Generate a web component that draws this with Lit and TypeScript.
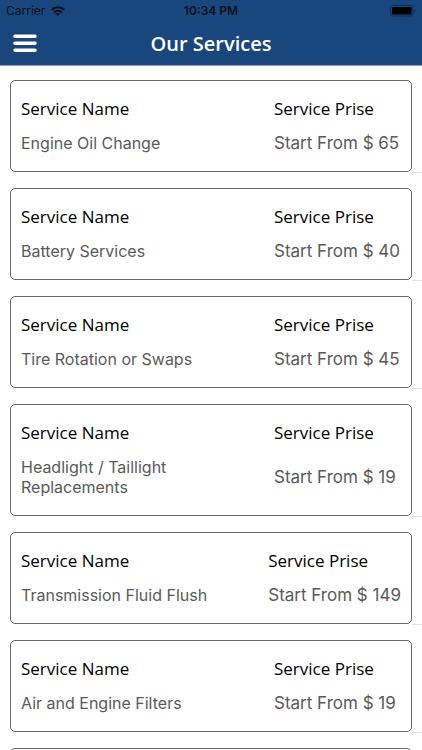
import { LitElement, html, css } from "lit";
import { customElement, property } from "lit/decorators.js";

interface Service {
  name: string;
  price: string;
}

const SERVICES: Service[] = [
  { name: "Engine Oil Change", price: "65" },
  { name: "Battery Services", price: "40" },
  { name: "Tire Rotation or Swaps", price: "45" },
  { name: "Headlight / Taillight Replacements", price: "19" },
  { name: "Transmission Fluid Flush", price: "149" },
  { name: "Air and Engine Filters", price: "19" },
];

@customElement("status-bar")
class StatusBar extends LitElement {
  static styles = css`
    :host {
      display: grid;
      grid-template-columns: 1fr auto 1fr;
      align-items: center;
      height: 22px;
      padding: 0 6px;
      color: #04101f;
      font: 12px/16px Inter, "Liberation Sans", sans-serif;
    }
    .carrier {
      display: flex;
      align-items: center;
      gap: 6px;
    }
    .time {
      font-weight: 600;
    }
    .battery {
      justify-self: end;
    }
    svg {
      display: block;
    }
  `;

  render() {
    return html`
      <div class="carrier">
        <span>Carrier</span>
        <svg width="14" height="10" viewBox="0 0 14 10" fill="none" stroke="currentColor" stroke-width="2.2" aria-hidden="true">
          <path d="M0.8 4C4.3 0.3 9.7 0.3 13.2 4" />
          <path d="M3.2 6.4C5.4 4.2 8.6 4.2 10.8 6.4" />
          <path d="M7 9.9L4.9 7.8C6.1 6.7 7.9 6.7 9.1 7.8Z" fill="currentColor" stroke="none" />
        </svg>
      </div>
      <span class="time">10:34 PM</span>
      <svg class="battery" width="26" height="12" viewBox="0 0 26 12" aria-hidden="true">
        <rect x="0.5" y="0.5" width="22.5" height="10.5" rx="2.6" fill="none" stroke="#0f2c50" />
        <rect x="2" y="2" width="19.5" height="7.5" rx="1.3" fill="#000" />
        <path d="M24.2 4.2C25.5 4.6 25.5 6.9 24.2 7.4Z" fill="#0f2c50" />
      </svg>
    `;
  }
}

@customElement("service-card")
class ServiceCard extends LitElement {
  @property({ attribute: false }) service?: Service;

  static styles = css`
    :host {
      display: block;
      position: relative;
      padding: 0 10px;
    }
    :host::after {
      content: "";
      position: absolute;
      right: 0;
      bottom: -1px;
      width: 10px;
      height: 1px;
      background: #e4e4e6;
    }
    .card {
      box-sizing: border-box;
      min-height: 92px;
      padding: 16px 10px 18px;
      border: 1px solid #6a6a6a;
      border-radius: 5px;
      background: #fff;
    }
    .fields {
      display: grid;
      grid-template-columns: minmax(0, 1fr) minmax(127px, max-content);
      grid-template-rows: 24px auto;
      grid-auto-flow: column;
      row-gap: 12px;
      align-items: center;
      margin: 0;
    }
    dt {
      color: #000;
      font: 17px/24px "Open Sans", "Noto Sans", sans-serif;
    }
    dd {
      margin: 0;
      color: #5a5a5a;
      font: 17px/20px Inter, "Liberation Sans", sans-serif;
    }
    .name {
      max-width: 200px;
      font-size: 16px;
    }
  `;

  render() {
    const s = this.service;
    return html`
      <article class="card">
        ${s
          ? html`<dl class="fields">
              <dt>Service Name</dt>
              <dd class="name">${s.name}</dd>
              <dt>Service Prise</dt>
              <dd>Start From $ ${s.price}</dd>
            </dl>`
          : null}
      </article>
    `;
  }
}

@customElement("app-root")
class AppRoot extends LitElement {
  static styles = css`
    :host {
      display: flex;
      flex-direction: column;
      height: 100vh;
      background: #fff;
    }
    header {
      flex: none;
      background: #19477d;
      border-bottom: 1px solid #8ba3be;
    }
    .nav {
      display: grid;
      grid-template-columns: 50px 1fr 50px;
      align-items: center;
      height: 43px;
    }
    .menu {
      display: flex;
      justify-content: center;
      padding: 8px 0;
      border: 0;
      background: none;
      color: #fff;
    }
    h1 {
      margin: 0;
      color: #fff;
      text-align: center;
      font: 600 20px/28px "Open Sans", "Noto Sans", sans-serif;
    }
    main {
      flex: 1;
      min-height: 0;
      display: flex;
      flex-direction: column;
      gap: 16px;
      padding: 14px 0;
      overflow-y: auto;
      scrollbar-width: none;
    }
    service-card {
      flex: none;
    }
  `;

  render() {
    return html`
      <header>
        <status-bar></status-bar>
        <div class="nav">
          <button class="menu" aria-label="Menu">
            <svg width="24" height="19" viewBox="0 0 24 19" fill="none" stroke="currentColor" stroke-width="3.6" stroke-linecap="round">
              <path d="M2 2.2H22M2 9.2H22M2 16.2H22" />
            </svg>
          </button>
          <h1>Our Services</h1>
        </div>
      </header>
      <main>
        ${SERVICES.map((s) => html`<service-card .service=${s}></service-card>`)}
        <service-card></service-card>
      </main>
    `;
  }
}
